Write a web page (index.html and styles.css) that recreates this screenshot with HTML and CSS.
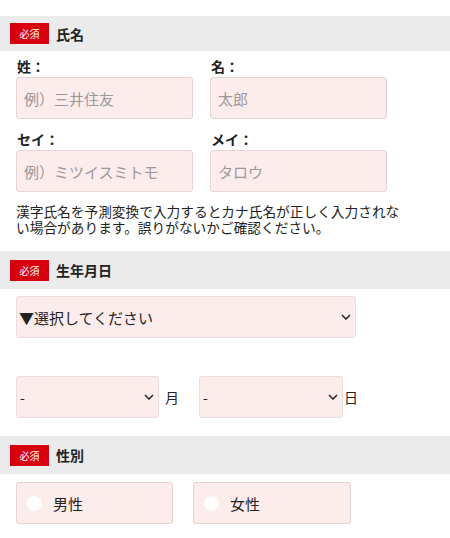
FILE: index.html
```html
<!DOCTYPE html>
<html lang="ja">
<head>
  <meta charset="UTF-8">
  <meta name="viewport" content="width=device-width,initial-scale=1.0">
  <title>お客様情報入力</title>
  <link rel="stylesheet" href="styles.css">
</head>
<body>

  <div class="form-block">
    <div class="section-head first">
      <span class="required">必須</span>
      <span class="section-title">氏名</span>
    </div>

    <div class="name-grid">
      <div class="field">
        <label for="lastName">姓：</label>
        <input type="text" id="lastName" placeholder="例）三井住友">
      </div>
      <div class="field">
        <label for="firstName">名：</label>
        <input type="text" id="firstName" placeholder="太郎">
      </div>
      <div class="field">
        <label for="lastKana">セイ：</label>
        <input type="text" id="lastKana" placeholder="例）ミツイスミトモ">
      </div>
      <div class="field">
        <label for="firstKana">メイ：</label>
        <input type="text" id="firstKana" placeholder="タロウ">
      </div>
    </div>

    <p class="note">漢字氏名を予測変換で入力するとカナ氏名が正しく入力されない場合があります。誤りがないかご確認ください。</p>
  </div>

  <div class="form-block">
    <div class="section-head">
      <span class="required">必須</span>
      <span class="section-title">生年月日</span>
    </div>

    <div class="birth">
      <select class="select year">
        <option>▼選択してください</option>
      </select>

      <div class="date-row">
        <select class="select small">
          <option>-</option>
        </select>
        <span class="unit">月</span>
        <select class="select small day">
          <option>-</option>
        </select>
        <span class="unit">日</span>
      </div>
    </div>
  </div>

  <div class="form-block">
    <div class="section-head after-date">
      <span class="required">必須</span>
      <span class="section-title">性別</span>
    </div>

    <div class="gender">
      <label class="radio-box">
        <input type="radio" name="gender">
        <span class="dot"></span>
        男性
      </label>
      <label class="radio-box">
        <input type="radio" name="gender">
        <span class="dot"></span>
        女性
      </label>
    </div>
  </div>

</body>
</html>
```

FILE: styles.css
```css
/* 入力フォーム */
body {
  margin: 0;
  padding: 0;
  background: #fff;
  color: #222;
  font-family: "Noto Sans CJK JP", "Noto Sans", sans-serif;
}
.section-head {
  display: flex;
  align-items: center;
  gap: 7px;
  height: 38px;
  padding-left: 10px;
  margin-top: 16px;
  background: #ebebeb;
}
.section-head.first {
  height: 35px;
}
.section-head.after-date {
  margin-top: 18px;
}
.required {
  display: inline-flex;
  align-items: center;
  justify-content: center;
  width: 39px;
  height: 21px;
  background: #d7000f;
  color: #fff;
  font-size: 10px;
}
.section-title {
  font-size: 14px;
  font-weight: 700;
}
.name-grid {
  display: grid;
  grid-template-columns: 177px 177px;
  column-gap: 17px;
  row-gap: 10px;
  padding: 5px 16px 0;
}
.field label {
  display: block;
  font-size: 14px;
  font-weight: 700;
  line-height: 20px;
  margin-bottom: 1px;
  padding-left: 1px;
}
.field input {
  box-sizing: border-box;
  width: 100%;
  height: 42px;
  padding: 0 7px;
  border: 1px solid #e6d3d3;
  border-radius: 3px;
  background: #fdecec;
  font-family: inherit;
  font-size: 15px;
  color: #222;
}
.field input::placeholder {
  color: #999;
}
.note {
  max-width: 395px;
  margin: 11px 0 0;
  padding: 0 16px;
  font-size: 13.7px;
  line-height: 16px;
}
.birth {
  padding: 7px 16px 0;
}
.select {
  appearance: none;
  -webkit-appearance: none;
  box-sizing: border-box;
  height: 42px;
  padding: 0 20px 0 2px;
  border: 1px solid #ecdcdc;
  border-radius: 3px;
  background-color: #fdecec;
  background-image: url("data:image/svg+xml,%3Csvg xmlns='http://www.w3.org/2000/svg' width='10' height='6' viewBox='0 0 10 6'%3E%3Cpath d='M1 1l4 4 4-4' fill='none' stroke='%23222' stroke-width='1.5'/%3E%3C/svg%3E");
  background-repeat: no-repeat;
  background-position: right 4px center;
  font-family: inherit;
  font-size: 15px;
  color: #222;
}
.select.year {
  width: 340px;
}
.date-row {
  display: flex;
  align-items: center;
  margin-top: 38px;
}
.select.small {
  width: 143px;
  padding-left: 3px;
  font-size: 14px;
}
.select.day {
  width: 144px;
}
.unit {
  font-size: 14px;
  margin: 0 20px 0 6px;
}
.date-row .unit:last-child {
  margin-left: 1px;
}
.gender {
  display: flex;
  gap: 20px;
  padding: 8px 16px 0;
}
.radio-box {
  box-sizing: border-box;
  display: flex;
  align-items: center;
  gap: 11px;
  width: 157px;
  height: 42px;
  padding-left: 10px;
  border: 1px solid #e6d3d3;
  border-radius: 3px;
  background: #fdecec;
  font-size: 15px;
  cursor: pointer;
}
.radio-box + .radio-box {
  width: 158px;
}
.radio-box input {
  display: none;
}
.dot {
  width: 15px;
  height: 15px;
  border-radius: 50%;
  background: #fff;
}
```
